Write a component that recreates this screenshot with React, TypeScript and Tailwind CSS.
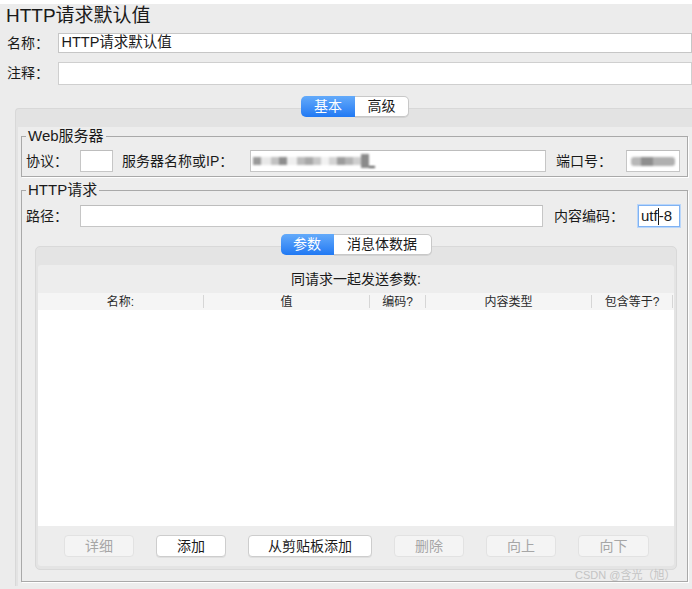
import React from "react";

const FONT = { fontFamily: '"Liberation Sans", "Noto Sans CJK SC", sans-serif' };

function Field({ className = "", children }: { className?: string; children?: React.ReactNode }) {
  return (
    <div className={`flex h-[22px] shrink-0 items-center border border-[#c6c6c6] border-t-[#bdbdbd] bg-white ${className}`}>
      {children}
    </div>
  );
}

function Btn({ label, disabled, w }: { label: string; disabled?: boolean; w: string }) {
  return (
    <div
      className={
        disabled
          ? `flex h-[22px] ${w} items-center justify-center rounded-[4px] border border-[#e2e2e2] bg-[#f4f4f4] text-[14px] text-[#a6a6a6]`
          : `flex h-[22px] ${w} items-center justify-center rounded-[4px] border border-[#cdcdcd] bg-white text-[14px] text-[#1a1a1a] shadow-[0_1px_0_rgba(0,0,0,0.06)]`
      }
    >
      {label}
    </div>
  );
}

const columns = [
  { label: "名称:", w: "w-[166px]" },
  { label: "值", w: "w-[166px]" },
  { label: "编码?", w: "w-[56px]" },
  { label: "内容类型", w: "w-[166px]" },
  { label: "包含等于?", w: "w-[81px]" },
];

export default function App() {
  return (
    <div className="relative flex h-[589px] w-[692px] flex-col overflow-hidden bg-[#ececec] text-[#1a1a1a]" style={FONT}>
      <div className="h-[4px] bg-white" />
      <div className="h-[24px] pl-[6px] text-[19px] leading-[24px]">HTTP请求默认值</div>

      {/* 名称 */}
      <div className="mt-[5px] flex h-[20px] items-center">
        <span className="w-[59px] pl-[7px] text-[14px]">名称：</span>
        <div className="flex h-[20px] w-[640px] items-center border border-[#c6c6c6] bg-white pl-[2px] text-[14.5px]">HTTP请求默认值</div>
      </div>
      {/* 注释 */}
      <div className="mt-[9px] flex h-[23px] items-center">
        <span className="w-[59px] pl-[7px] text-[14px]">注释：</span>
        <div className="h-[23px] w-[640px] border border-[#cfcfcf] bg-white" />
      </div>

      {/* 基本 / 高级 */}
      <div className="relative z-10 mt-[11px] flex h-[21px] pl-[301px]">
        <div className="flex w-[54px] items-center justify-center rounded-l-[5px] bg-gradient-to-b from-[#63aafa] to-[#1f78f3] text-[14px] text-white">基本</div>
        <div className="flex w-[54px] items-center justify-center rounded-r-[5px] border border-l-0 border-[#c8c8c8] bg-white text-[14px] shadow-[0_1px_0_rgba(0,0,0,0.08)]">高级</div>
      </div>

      <div className="-mt-[9px] ml-[15px] flex flex-col rounded-tl-[4px] border-l border-t border-[#d8d8d8] bg-[#e3e3e3] pl-[2px] pt-[18px]">
        <div className="flex flex-col bg-[#ededed] pb-[4px] pl-[3px] pr-[4px] pt-[1px]">
          {/* Web服务器 */}
          <fieldset className="border border-[#a9a9a9] pb-[4px] pl-[4px] pr-[7px] shadow-[1px_1px_0_#ffffff]">
            <legend className="px-[2px] text-[15px] leading-[16px]">Web服务器</legend>
            <div className="flex items-center pt-[6px] text-[14px]">
              <span className="w-[54px]">协议：</span>
              <Field className="w-[33px]" />
              <span className="ml-[9px] w-[128px]">服务器名称或IP：</span>
              <Field className="w-[296px] pl-[2px]">
                <div className="flex items-center blur-[1px]">
                  <div className="h-[8px] w-[8px] bg-[#9a9a9a]" />
                  <div className="h-[8px] w-[10px] bg-[#e8e8e8]" />
                  <div className="h-[8px] w-[8px] bg-[#c2c2c2]" />
                  <div className="h-[8px] w-[8px] bg-[#8e8e8e]" />
                  <div className="h-[8px] w-[10px] bg-[#efefef]" />
                  <div className="h-[8px] w-[8px] bg-[#bcbcbc]" />
                  <div className="h-[8px] w-[8px] bg-[#a8a8a8]" />
                  <div className="h-[8px] w-[8px] bg-[#c8c8c8]" />
                  <div className="h-[8px] w-[8px] bg-[#f2f2f2]" />
                  <div className="h-[8px] w-[8px] bg-[#d4d4d4]" />
                  <div className="h-[8px] w-[8px] bg-[#9c9c9c]" />
                  <div className="h-[8px] w-[8px] bg-[#b4b4b4]" />
                  <div className="h-[8px] w-[8px] bg-[#cfcfcf]" />
                  <div className="h-[14px] w-[8px] self-start bg-[#8a8a8a]" />
                  <div className="h-[2px] w-[6px] self-end bg-[#555555]" />
                </div>
              </Field>
              <span className="ml-[10px] w-[70px]">端口号：</span>
              <Field className="w-[54px] justify-center">
                <div className="flex h-[9px] w-[44px] overflow-hidden rounded-[3px] blur-[1px]">
                  <div className="w-[10px] bg-[#b8b8b8]" />
                  <div className="w-[12px] bg-[#8e8e8e]" />
                  <div className="flex-1 bg-[#b0b0b0]" />
                </div>
              </Field>
            </div>
          </fieldset>

          {/* HTTP请求 */}
          <fieldset className="mt-[5px] flex flex-col border border-[#a9a9a9] pb-[11px] pl-[4px] pr-[7px] shadow-[1px_1px_0_#ffffff]">
            <legend className="px-[2px] text-[15px] leading-[16px]">HTTP请求</legend>
            <div className="flex items-center pt-[7px] text-[14px]">
              <span className="w-[54px]">路径：</span>
              <Field className="w-[463px]" />
              <span className="ml-[11px] w-[84px]">内容编码：</span>
              <div className="flex h-[22px] w-[42px] items-center border border-[#7fb2f3] bg-white pl-[2px] text-[15px] shadow-[0_0_0_1px_#b9d6fa]">
                utf<span className="h-[17px] w-[1px] bg-[#1a1a1a]" />-8
              </div>
            </div>

            <div className="ml-[9px] mt-[7px] flex w-[642px] flex-col">
              <div className="relative z-10 flex h-[21px] justify-center">
                <div className="flex w-[53px] items-center justify-center rounded-l-[5px] bg-gradient-to-b from-[#63aafa] to-[#1f78f3] text-[14px] text-white">参数</div>
                <div className="flex w-[98px] items-center justify-center rounded-r-[5px] border border-l-0 border-[#c8c8c8] bg-white text-[14px] shadow-[0_1px_0_rgba(0,0,0,0.08)]">消息体数据</div>
              </div>
              <div className="-mt-[9px] flex flex-col rounded-[5px] border border-[#d9d9d9] bg-[#e4e4e4] px-[2px] pb-[3px] pt-[18px]">
                <div className="flex flex-col rounded-[3px] bg-[#ededed] pb-[9px]">
                  <div className="flex h-[28px] items-center justify-center text-[14px]">同请求一起发送参数:</div>
                  <div className="flex h-[17px] items-center bg-[#f5f5f5] text-[12px] text-[#2a2a2a]">
                    {columns.map((c) => (
                      <div key={c.label} className={`flex h-[13px] ${c.w} items-center justify-center border-r border-[#d6d6d6]`}>
                        {c.label}
                      </div>
                    ))}
                  </div>
                  <div className="h-[216px] bg-white" />
                  <div className="flex gap-[22px] pl-[26px] pt-[9px]">
                    <Btn label="详细" disabled w="w-[70px]" />
                    <Btn label="添加" w="w-[70px]" />
                    <Btn label="从剪贴板添加" w="w-[124px]" />
                    <Btn label="删除" disabled w="w-[70px]" />
                    <Btn label="向上" disabled w="w-[70px]" />
                    <Btn label="向下" disabled w="w-[71px]" />
                  </div>
                </div>
              </div>
            </div>
          </fieldset>
        </div>
      </div>

      <div className="absolute left-[575px] top-[567px] text-[11px] leading-[16px] text-[#c4c4c4]">CSDN @含光（旭）</div>
    </div>
  );
}
